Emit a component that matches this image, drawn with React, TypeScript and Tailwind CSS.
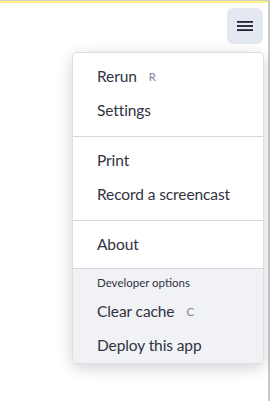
import React from "react";

const font = { fontFamily: '"Source Sans Pro", Lato, "Noto Sans", sans-serif' };

function Item({ label, shortcut }: { label: string; shortcut?: string }) {
  return (
    <div className="flex items-center h-[34px] pl-6 text-[15.5px] tracking-[-0.1px] text-[#31333f]">
      <span>{label}</span>
      {shortcut && <span className="ml-[12px] text-[11.5px] text-[#808495]">{shortcut}</span>}
    </div>
  );
}

export default function App() {
  return (
    <div className="relative w-[270px] h-[401px] bg-white overflow-hidden" style={font}>
      <div className="h-px bg-[#cfcfcf]" />
      <div className="h-[2px] bg-[#fff480]" />
      <div className="absolute right-0 top-[1px] bottom-0 w-[2px] bg-[#c8c8c8]" />
      <div className="flex justify-end pr-[7px] pt-[5px]">
        <div className="w-[36px] h-[36px] rounded-[6px] bg-[#e4e8f0] flex items-center justify-center">
          <svg width="16" height="12" viewBox="0 0 16 12">
            <rect x="0" y="1" width="16" height="1.8" fill="#1f2132" />
            <rect x="0" y="5.1" width="16" height="1.8" fill="#1f2132" />
            <rect x="0" y="9.2" width="16" height="1.8" fill="#1f2132" />
          </svg>
        </div>
      </div>
      <div className="absolute left-[72px] top-[52px] w-[192px] rounded-[5px] border border-[#dcdde2] bg-white shadow-[0_4px_16px_rgba(0,0,0,0.18)] overflow-hidden">
        <div className="pt-[7px] pb-[8px]">
          <Item label="Rerun" shortcut="R" />
          <Item label="Settings" />
        </div>
        <div className="h-px bg-[#d6d7dc]" />
        <div className="pt-[7px] pb-[8px]">
          <Item label="Print" />
          <Item label="Record a screencast" />
        </div>
        <div className="h-px bg-[#d6d7dc]" />
        <div className="pt-[7px] pb-[6px]">
          <Item label="About" />
        </div>
        <div className="border-t border-[#d6d7dc] bg-[#f0f2f6] pt-[2px]">
          <div className="pl-6 h-[24px] flex items-center text-[11.5px] text-[#31333f]">Developer options</div>
          <Item label="Clear cache" shortcut="C" />
          <Item label="Deploy this app" />
        </div>
      </div>
    </div>
  );
}
